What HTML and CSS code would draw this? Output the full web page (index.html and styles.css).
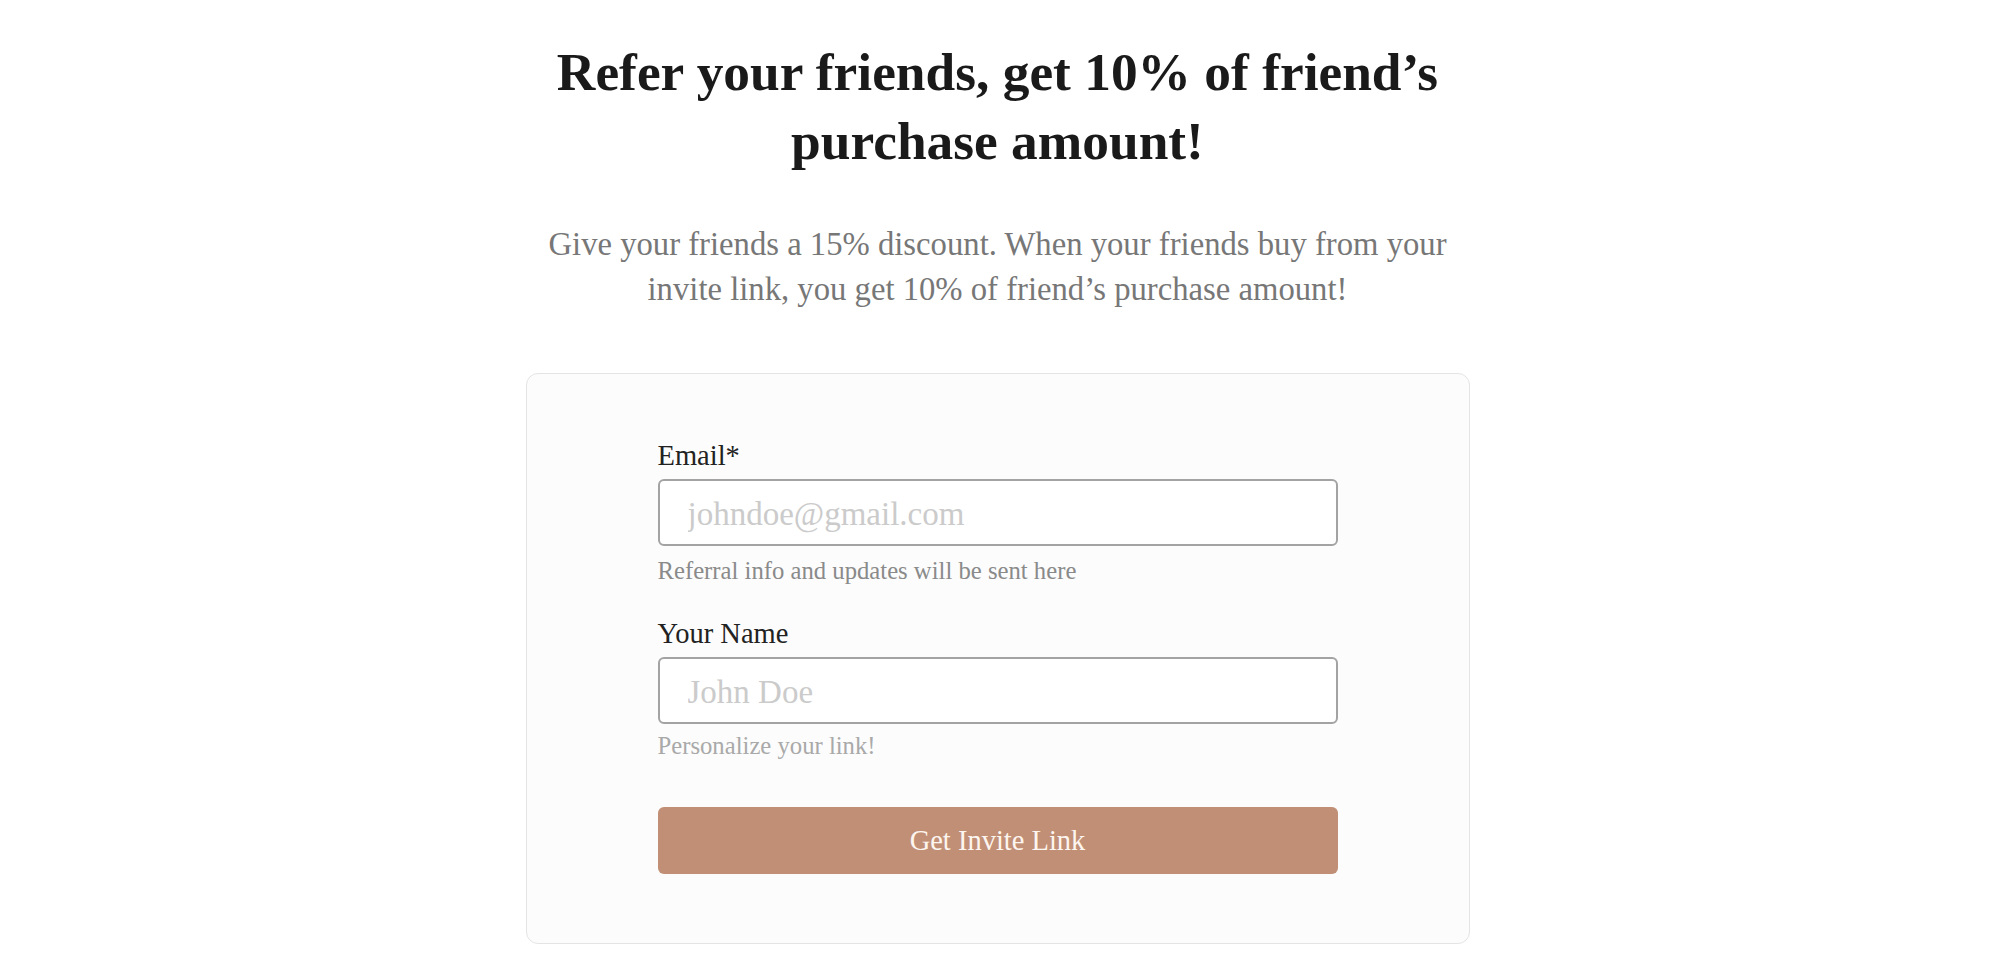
FILE: index.html
```html
<!DOCTYPE html>
<html lang="en">
<head>
<meta charset="utf-8">
<title>Refer your friends</title>
<link rel="stylesheet" href="styles.css">
</head>
<body>
<main class="page">
  <h1 class="title">Refer your friends, get 10% of friend’s<br>purchase amount!</h1>
  <p class="subtitle">Give your friends a 15% discount. When your friends buy from your<br>invite link, you get 10% of friend’s purchase amount!</p>
  <section class="card">
    <form class="form">
      <label class="label" for="email">Email*</label>
      <input class="input" id="email" type="email" placeholder="johndoe@gmail.com">
      <p class="hint hint-email">Referral info and updates will be sent here</p>
      <label class="label label-name" for="name">Your Name</label>
      <input class="input" id="name" type="text" placeholder="John Doe">
      <p class="hint hint-name">Personalize your link!</p>
      <button class="button" type="button">Get Invite Link</button>
    </form>
  </section>
</main>
</body>
</html>
```

FILE: styles.css
```css
* { box-sizing: border-box; }

html, body {
  margin: 0;
  padding: 0;
  background: #ffffff;
}

body {
  font-family: "Liberation Serif", "Times New Roman", serif;
  color: #1c1c1c;
}

.page {
  display: flex;
  flex-direction: column;
  align-items: center;
  padding: 38px 4px 0 0;
}

.title {
  margin: 0;
  font-size: 53.4px;
  line-height: 69px;
  font-weight: 700;
  text-align: center;
  color: #1a1a1a;
}

.subtitle {
  margin: 46px 0 0;
  font-size: 32.7px;
  line-height: 45px;
  text-align: center;
  color: #777777;
}

.card {
  margin-top: 61px;
  width: 944px;
  background: #fcfcfc;
  border: 1px solid #e4e4e4;
  border-radius: 12px;
  padding: 65px 131px 69px;
}

.form {
  display: flex;
  flex-direction: column;
  width: 680px;
  margin: 0 auto;
}

.label {
  font-size: 28.5px;
  line-height: 34px;
  color: #222222;
}

.label-name {
  margin-top: 32px;
}

.input {
  margin-top: 6px;
  height: 67px;
  width: 100%;
  border: 2px solid #a3a3a3;
  border-radius: 6px;
  background: #ffffff;
  padding: 3px 28px 0;
  font-family: "Liberation Serif", "Times New Roman", serif;
  font-size: 33px;
  color: #333333;
  outline: none;
}

.input::placeholder {
  color: #cbcbcb;
}

.hint {
  margin: 0;
  font-size: 24.7px;
  line-height: 29px;
}

.hint-email {
  margin-top: 10px;
  color: #8a8a8a;
}

.hint-name {
  margin-top: 7px;
  color: #a9a9a9;
}

.button {
  margin-top: 47px;
  height: 67px;
  width: 100%;
  border: none;
  border-radius: 6px;
  background: #c18f75;
  color: #fdf5ef;
  font-family: "Liberation Serif", "Times New Roman", serif;
  font-size: 28.5px;
  cursor: pointer;
}
```
